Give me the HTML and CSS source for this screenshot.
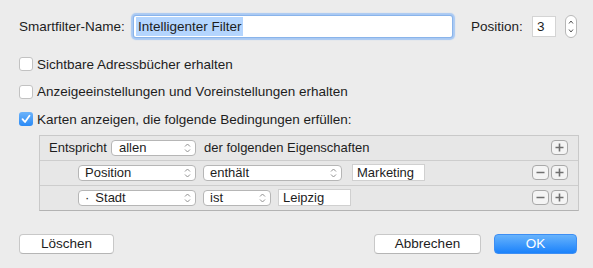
FILE: index.html
```html
<!DOCTYPE html>
<html lang="de">
<head>
  <meta charset="UTF-8" />
  <title>Smartfilter</title>
  <link rel="stylesheet" href="styles.css">
</head>
<body>
  <div class="dialog">
    <div class="name-row">
      <span class="label name-label">Smartfilter-Name:</span>
      <div class="name-field focused"><span class="selected">Intelligenter Filter</span></div>
      <span class="label pos-label">Position:</span>
      <div class="pos-field">3</div>
      <div class="stepper">
        <svg width="12" height="23" viewBox="0 0 12 23">
          <rect x="0.5" y="0.5" width="11" height="22" rx="5.5" fill="#fff" stroke="#b8b8b8"/>
          <path d="M4 8.5 L6 6 L8 8.5" fill="none" stroke="#555" stroke-width="1"/>
          <path d="M4 14.5 L6 17 L8 14.5" fill="none" stroke="#555" stroke-width="1"/>
        </svg>
      </div>
    </div>

    <div class="options">
      <label class="check-row"><span class="box"></span>Sichtbare Adressbücher erhalten</label>
      <label class="check-row"><span class="box"></span>Anzeigeeinstellungen und Voreinstellungen erhalten</label>
      <label class="check-row"><span class="box checked">
        <svg width="14" height="14" viewBox="0 0 14 14"><path d="M3.5 7.2 L6 10 L10.5 3.8" fill="none" stroke="#fff" stroke-width="1.8" stroke-linecap="round" stroke-linejoin="round"/></svg>
      </span>Karten anzeigen, die folgende Bedingungen erfüllen:</label>
    </div>

    <div class="criteria">
      <div class="crit-row head">
        <span class="crit-text match-label">Entspricht</span>
        <div class="popup w-allen">allen<span class="chev"></span></div>
        <span class="crit-text">der folgenden Eigenschaften</span>
        <div class="row-buttons">
          <span class="small-btn plus"></span>
        </div>
      </div>
      <div class="crit-row sub">
        <div class="popup w-field">Position<span class="chev"></span></div>
        <div class="popup w-op">enthält<span class="chev"></span></div>
        <div class="value-field w-value">Marketing</div>
        <div class="row-buttons">
          <span class="small-btn minus"></span>
          <span class="small-btn plus"></span>
        </div>
      </div>
      <div class="crit-row sub">
        <div class="popup w-field"><span class="dot">·</span>Stadt<span class="chev"></span></div>
        <div class="popup w-op-short">ist<span class="chev"></span></div>
        <div class="value-field w-value">Leipzig</div>
        <div class="row-buttons">
          <span class="small-btn minus"></span>
          <span class="small-btn plus"></span>
        </div>
      </div>
    </div>

    <div class="footer">
      <button class="btn w-del">Löschen</button>
      <span class="spacer"></span>
      <button class="btn w-cancel">Abbrechen</button>
      <button class="btn primary w-ok">OK</button>
    </div>
  </div>
</body>
</html>
```

FILE: styles.css
```css
body {
  margin: 0;
  background: #ececec;
  font-family: "Liberation Sans", Arial, sans-serif;
  font-size: 13.5px;
  color: #1d1d1d;
  width: 593px;
  height: 268px;
  overflow: hidden;
}
.dialog {
  padding: 16px 16px 0 19px;
}
.name-row {
  display: flex;
  align-items: center;
  height: 21px;
}
.label {
  white-space: nowrap;
}
.name-label {
  width: 107px;
  flex: none;
}
.name-field {
  margin-left: 8px;
  width: 318px;
  height: 21px;
  box-sizing: border-box;
  background: #fff;
  padding-left: 2px;
  display: flex;
  align-items: center;
  flex: none;
}
.focused {
  box-shadow: 0 0 0 1px #8ab4ea, 0 0 1px 3px #a9c9f3;
  border-radius: 2px;
}
.selected {
  background: #b4d5fe;
  padding: 1px 1px 1px 2px;
  line-height: 17px;
}
.pos-label {
  margin-left: 19px;
  width: 51px;
  flex: none;
}
.pos-field {
  margin-left: 10px;
  width: 24px;
  height: 21px;
  box-sizing: border-box;
  background: #fff;
  border: 1px solid #d4d4d4;
  padding-left: 4px;
  line-height: 19px;
  flex: none;
}
.stepper {
  margin-left: 9px;
  height: 23px;
}
.options {
  padding-top: 20px;
}
.check-row {
  display: flex;
  align-items: center;
  height: 14px;
  margin-bottom: 13.5px;
}
.box {
  width: 14px;
  height: 14px;
  box-sizing: border-box;
  border: 1px solid #c2c2c2;
  border-radius: 3px;
  background: #fff;
  margin-right: 4px;
  flex: none;
}
.box.checked {
  border: none;
  background: linear-gradient(#6cb3fa, #2a8af6);
}
.box svg {
  display: block;
}
.criteria {
  margin: -5px 0 0 20px;
  width: 538px;
  border: 1px solid #c9c9c9;
  border-bottom-color: #b3b3b3;
  background: #e7e7e7;
}
.crit-row {
  display: flex;
  align-items: center;
  height: 24px;
  padding: 0 10px 0 9px;
  font-size: 13px;
}
.crit-row + .crit-row {
  border-top: 1px solid #cdcdcd;
}
.crit-row.sub {
  padding-left: 38px;
}
.crit-text {
  white-space: nowrap;
}
.match-label {
  width: 62px;
  flex: none;
}
.head .popup {
  margin-right: 8px;
  padding-left: 7px;
}
.popup {
  position: relative;
  height: 16px;
  box-sizing: border-box;
  background: #fff;
  border: 1px solid #b6b6b6;
  border-radius: 4px;
  padding-left: 6px;
  line-height: 14px;
  margin-right: 7px;
  white-space: nowrap;
  flex: none;
}
.chev {
  position: absolute;
  right: 4px;
  top: 1px;
  width: 7px;
  height: 12px;
  background:
    url("data:image/svg+xml;utf8,<svg xmlns='http://www.w3.org/2000/svg' width='7' height='12'><path d='M1 4.5 L3.5 2 L6 4.5 M1 7.5 L3.5 10 L6 7.5' fill='none' stroke='%23909090' stroke-width='1'/></svg>") no-repeat;
}
.dot {
  margin-right: 6px;
}
.w-allen { width: 85px; }
.w-field { width: 118px; }
.w-op { width: 139px; margin-right: 10px; }
.w-op-short { width: 68px; }
.w-value { width: 73px; }
.value-field {
  height: 17px;
  box-sizing: border-box;
  background: #fff;
  border: 1px solid #d0d0d0;
  padding-left: 4px;
  line-height: 15px;
  flex: none;
}
.row-buttons {
  margin-left: auto;
  display: flex;
  gap: 2px;
}
.small-btn {
  width: 17px;
  height: 15px;
  box-sizing: border-box;
  border: 1px solid #a9a9a9;
  border-radius: 4px;
  background: #f4f4f4 no-repeat center;
}
.plus {
  background-image: url("data:image/svg+xml;utf8,<svg xmlns='http://www.w3.org/2000/svg' width='9' height='9'><path d='M4.5 0.5 V8.5 M0.5 4.5 H8.5' stroke='%23707070' stroke-width='1.6'/></svg>");
}
.minus {
  background-image: url("data:image/svg+xml;utf8,<svg xmlns='http://www.w3.org/2000/svg' width='9' height='9'><path d='M0.5 4.5 H8.5' stroke='%23707070' stroke-width='1.6'/></svg>");
}
.footer {
  display: flex;
  align-items: center;
  margin-top: 23px;
  width: 558px;
}
.spacer {
  flex: 1;
}
.btn {
  height: 20px;
  box-sizing: border-box;
  border: 1px solid #c8c8c8;
  border-bottom-color: #b5b5b5;
  border-radius: 4px;
  background: #fff;
  font: inherit;
  font-size: 13.5px;
  color: #1d1d1d;
  padding: 0;
}
.btn.primary {
  margin-left: 13px;
  border: 1px solid #3d8ef3;
  background: linear-gradient(#67b3fc, #1b82fb);
  color: #fff;
}
.w-del { width: 95px; }
.w-cancel { width: 107px; }
.w-ok { width: 83px; }
```
